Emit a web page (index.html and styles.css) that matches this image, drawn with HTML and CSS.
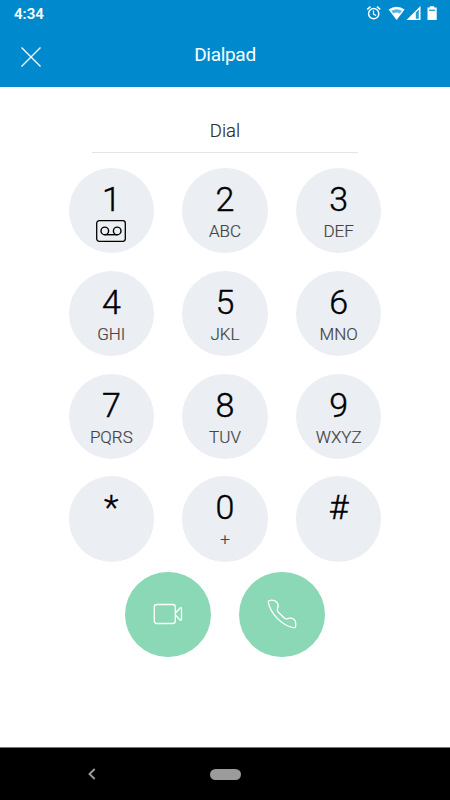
FILE: index.html
```html
<!DOCTYPE html>
<html lang="en">
<head>
    <meta charset="UTF-8">
    <meta name="viewport" content="width=device-width, initial-scale=1.0">
    <title>Dialpad</title>
    <link rel="stylesheet" href="styles.css">
</head>
<body>
    <div class="status-bar">
        <span class="time">4:34</span>
        <svg class="status-icons" width="74" height="18" viewBox="0 0 74 18">
            <g fill="none" stroke="#fff" stroke-width="1.5">
                <circle cx="7.7" cy="8.7" r="5.1"/>
                <path d="M1.2 4.4l3.3-2.8M14.2 4.4l-3.3-2.8"/>
                <path d="M7.5 5.5v3.6l2.6 1.5" stroke-width="1.2"/>
            </g>
            <path d="M22.6 4.4Q30.6-.8 38.6 4.4L30.6 15z" fill="#fff"/>
            <path d="M25.3 5.8Q30.6 2.6 35.9 5.8L33.8 8.6Q30.6 6.4 27.4 8.6z" fill="#008ace" opacity=".65"/>
            <path d="M40.5 15L54.5 1v14z" fill="#fff"/>
            <path d="M49.8 7.5l3-3v9.2h-3z" fill="#008ace" opacity=".85"/>
            <path d="M61.5 2.6h2.3V1.2h4.4v1.4h2.5v12.4h-9.2z" fill="#fff"/>
            <path d="M63 4.6h6.2V6H63z" fill="#008ace" opacity=".8"/>
        </svg>
    </div>
    <div class="header">
        <svg class="close" width="20" height="20" viewBox="0 0 20 20">
            <path d="M.5.5l19 19M19.5.5l-19 19" stroke="#fff" stroke-width="1.3"/>
        </svg>
        <h1>Dialpad</h1>
    </div>

    <div class="dialpad">
        <div class="dial-input">Dial</div>
        <div class="keys">
            <button class="key">
                <span class="digit">1</span>
                <svg class="voicemail" width="30" height="22" viewBox="0 0 30 22" fill="none" stroke="#000">
                    <rect x=".7" y=".7" width="28.6" height="20.6" rx="2.5" stroke-width="1.3"/>
                    <circle cx="8.8" cy="10.9" r="3.8" stroke-width="1.4"/>
                    <circle cx="21.2" cy="10.9" r="3.8" stroke-width="1.4"/>
                    <path d="M8.8 14.7h12.4" stroke-width="1.4"/>
                </svg>
            </button>
            <button class="key"><span class="digit">2</span><span class="letters">ABC</span></button>
            <button class="key"><span class="digit">3</span><span class="letters">DEF</span></button>
            <button class="key"><span class="digit">4</span><span class="letters">GHI</span></button>
            <button class="key"><span class="digit">5</span><span class="letters">JKL</span></button>
            <button class="key"><span class="digit">6</span><span class="letters">MNO</span></button>
            <button class="key"><span class="digit">7</span><span class="letters">PQRS</span></button>
            <button class="key"><span class="digit">8</span><span class="letters">TUV</span></button>
            <button class="key"><span class="digit">9</span><span class="letters">WXYZ</span></button>
            <button class="key"><span class="digit">*</span></button>
            <button class="key"><span class="digit">0</span><span class="letters">+</span></button>
            <button class="key"><span class="digit">#</span></button>
        </div>
        <div class="actions">
            <button class="call">
                <svg width="30" height="30" viewBox="0 0 30 30" fill="none" stroke="#fff" stroke-width="1.3" stroke-linejoin="round">
                    <rect x="1.3" y="5.5" width="21" height="19" rx="2.5"/>
                    <path d="M22.3 14.2l4.8-5.2q1.4-.8 1.4.8v10.4q0 1.6-1.4.8l-4.8-5.2"/>
                </svg>
            </button>
            <button class="call">
                <svg width="30" height="30" viewBox="0 0 30 30" fill="none" stroke="#fff" stroke-width="1.3" stroke-linejoin="round">
                    <path d="M1.3 3.2C1.2 1.9 2 1.4 3.2 1.3C6 1 8.2 1.4 9.8 3.2C11.2 5 11.6 7.3 10.6 9.2C10 10.4 9.9 11.6 10.9 12.7L17.2 19C18 19.8 18.6 20.3 19.9 19.8C22.2 18.8 24.8 18.9 26.8 20.2C28.2 21.1 28.7 22.4 28.7 24V27C28.7 28.4 27.8 28.9 26.4 28.7C14.4 26.4 3.2 14 1.3 3.2z"/>
                </svg>
            </button>
        </div>
    </div>

    <div class="nav-bar">
        <svg class="back" width="8" height="12" viewBox="0 0 8 12">
            <path d="M6.7 1L1.5 6l5.2 5" fill="none" stroke="#9b9b9b" stroke-width="1.9"/>
        </svg>
        <span class="home"></span>
    </div>
</body>
</html>
```
FILE: styles.css
```css
* {
    box-sizing: border-box;
}
body {
    margin: 0;
    height: 800px;
    display: flex;
    flex-direction: column;
    background: #fff;
    font-family: Roboto, "Liberation Sans", sans-serif;
}
button {
    border: none;
    padding: 0;
    font-family: inherit;
    cursor: pointer;
}
.status-bar {
    height: 28px;
    padding: 4px 10px 0 14px;
    display: flex;
    justify-content: space-between;
    background: #008ace;
    color: #fff;
}
.time {
    font-size: 15px;
    font-weight: 600;
    line-height: 20px;
}
.status-icons {
    margin-top: 1px;
}
.header {
    height: 59px;
    padding: 0 21px;
    display: grid;
    grid-template-columns: 20px 1fr 20px;
    background: #008ace;
    color: #fff;
}
.close {
    margin-top: 19px;
}
h1 {
    margin: 14px 0 0;
    font-size: 19px;
    font-weight: 400;
    letter-spacing: -0.3px;
    line-height: 25px;
    text-align: center;
}
.dialpad {
    flex: 1;
    display: flex;
    flex-direction: column;
    align-items: center;
}
.dial-input {
    width: 266px;
    height: 66px;
    padding-top: 32px;
    border-bottom: 1px solid #e4e4e4;
    color: #303030;
    font-size: 18.5px;
    font-weight: 300;
    -webkit-text-stroke: 0.2px;
    line-height: 24px;
    text-align: center;
}
.keys {
    margin-top: 15px;
    display: grid;
    grid-template-columns: repeat(3, 85.4px);
    grid-auto-rows: 85.4px;
    gap: 17.4px 28.3px;
}
.key {
    display: flex;
    flex-direction: column;
    align-items: center;
    padding-top: 11px;
    border-radius: 50%;
    background: #ebeef3;
}
.digit {
    color: #000;
    font-size: 34px;
    font-weight: 300;
    -webkit-text-stroke: 0.4px;
    line-height: 40px;
}
.letters {
    color: #444;
    font-size: 17px;
    font-weight: 300;
    -webkit-text-stroke: 0.2px;
    line-height: 24px;
}
.voicemail {
    margin-top: 1px;
}
.actions {
    margin-top: 10px;
    display: flex;
    gap: 28.3px;
}
.call {
    width: 85.4px;
    height: 85.4px;
    display: flex;
    align-items: center;
    justify-content: center;
    border-radius: 50%;
    background: #8ad8b5;
}
.nav-bar {
    height: 53px;
    padding: 0 88px;
    display: grid;
    grid-template-columns: 8px 1fr 8px;
    align-items: center;
    background: #000;
    border-top: 1px solid #777;
}
.home {
    width: 31px;
    height: 11px;
    justify-self: center;
    border-radius: 6px;
    background: #9b9b9b;
}
```
